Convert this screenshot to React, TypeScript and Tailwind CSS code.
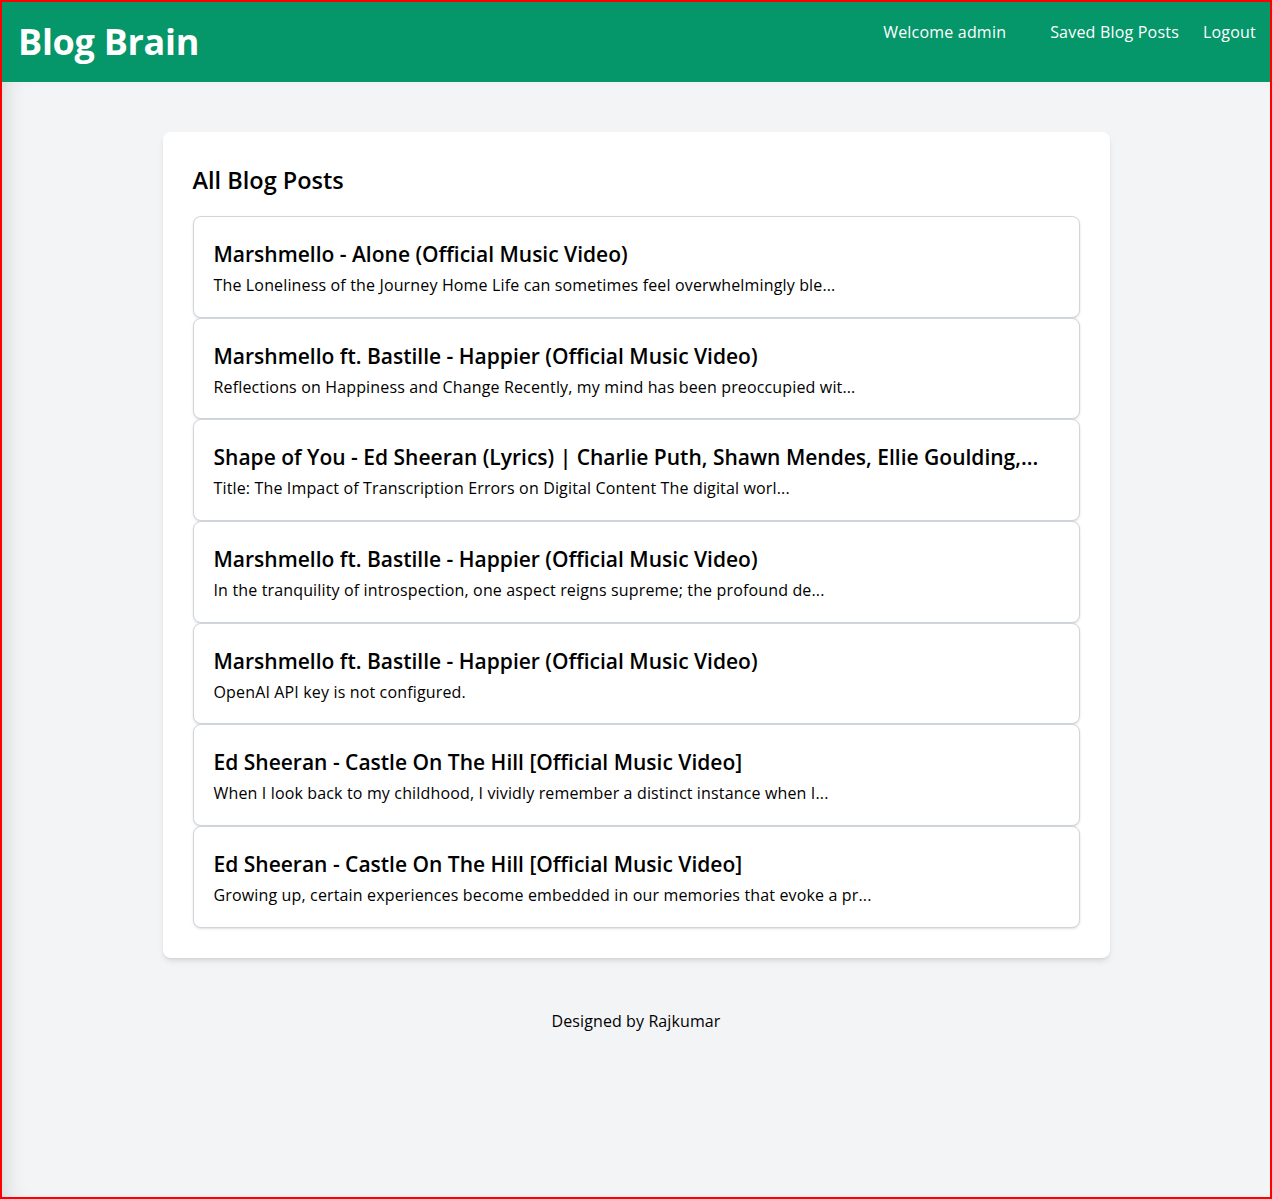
const posts = [
  {
    title: "Marshmello - Alone (Official Music Video)",
    excerpt: "The Loneliness of the Journey Home Life can sometimes feel overwhelmingly ble...",
  },
  {
    title: "Marshmello ft. Bastille - Happier (Official Music Video)",
    excerpt: "Reflections on Happiness and Change Recently, my mind has been preoccupied wit...",
  },
  {
    title: "Shape of You - Ed Sheeran (Lyrics) | Charlie Puth, Shawn Mendes, Ellie Goulding,...",
    excerpt: "Title: The Impact of Transcription Errors on Digital Content The digital worl...",
  },
  {
    title: "Marshmello ft. Bastille - Happier (Official Music Video)",
    excerpt: "In the tranquility of introspection, one aspect reigns supreme; the profound de...",
  },
  {
    title: "Marshmello ft. Bastille - Happier (Official Music Video)",
    excerpt: "OpenAI API key is not configured.",
  },
  {
    title: "Ed Sheeran - Castle On The Hill [Official Music Video]",
    excerpt: "When I look back to my childhood, I vividly remember a distinct instance when I...",
  },
  {
    title: "Ed Sheeran - Castle On The Hill [Official Music Video]",
    excerpt: "Growing up, certain experiences become embedded in our memories that evoke a pr...",
  },
];

export default function App() {
  return (
    <div className="h-[1199px] border-2 border-[#ff0000] bg-gray-100 flex flex-col overflow-hidden font-['Open_Sans',sans-serif] text-black">
      {/* Header */}
      <header className="bg-[#059669] h-20 pl-4 pr-[14px] flex justify-between items-start text-white">
        <h1 className="pt-5 text-[36px] leading-10 font-bold tracking-[-0.3px]">Blog Brain</h1>
        <nav className="pt-[18px] flex items-center text-[16px] leading-6 tracking-[0.2px]">
          <span className="mr-11">Welcome admin</span>
          <a className="mr-6">Saved Blog Posts</a>
          <a>Logout</a>
        </nav>
      </header>

      {/* Body */}
      <main className="flex-1 shadow-[inset_16px_0_22px_-14px_rgba(0,0,0,0.14)]">
        <div className="w-[947px] mx-auto mt-[50px] bg-white rounded-lg shadow-md px-[30px] pt-8 pb-[30px]">
          <h2 className="text-[23.5px] leading-8 font-semibold mb-5">All Blog Posts</h2>
          <ul className="flex flex-col">
            {posts.map((p, i) => (
              <li
                key={i}
                className="h-[101.7px] border border-gray-300 rounded-lg bg-white shadow-sm px-5 pt-[23px]"
              >
                <h3 className="text-[21px] leading-7 font-semibold mb-[5px] truncate">{p.title}</h3>
                <p className="text-[16px] leading-6 tracking-[0.15px]">{p.excerpt}</p>
              </li>
            ))}
          </ul>
        </div>

        <footer className="mt-[51px] text-center text-[16px] leading-6 tracking-[0.1px]">
          Designed by Rajkumar
        </footer>
      </main>
    </div>
  );
}
